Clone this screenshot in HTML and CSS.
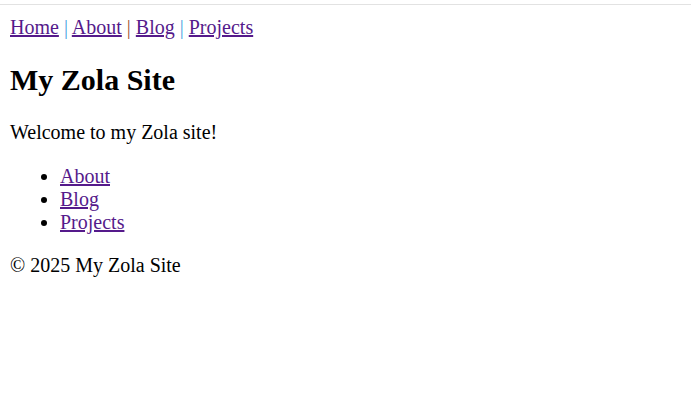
FILE: index.html
```html
<!DOCTYPE html>
<html lang="en">
<head>
<meta charset="utf-8">
<title>My Zola Site</title>
<link rel="stylesheet" href="styles.css">
</head>
<body>
<div class="top-rule"></div>
<div class="page">
  <nav class="nav">
    <a href="#">Home</a> <span class="sep sep-blue">|</span> <a href="#">About</a> <span class="sep sep-brown">|</span> <a href="#">Blog</a> <span class="sep sep-blue">|</span> <a href="#">Projects</a>
  </nav>
  <main>
    <h1 class="title">My Zola Site</h1>
    <p class="text">Welcome to my Zola site!</p>
    <ul class="links">
      <li><a href="#">About</a></li>
      <li><a href="#">Blog</a></li>
      <li><a href="#">Projects</a></li>
    </ul>
  </main>
  <footer class="footer">
    <p class="text">© 2025 My Zola Site</p>
  </footer>
</div>
</body>
</html>
```

FILE: styles.css
```css
html, body {
  margin: 0;
  padding: 0;
  background: #ffffff;
}
body {
  font-family: "Liberation Serif", "Times New Roman", serif;
  font-size: 20px;
  color: #000000;
}
.top-rule {
  margin-top: 4px;
  margin-right: 1px;
  height: 1px;
  background: #e2e2e2;
}
.page {
  padding: 11px 10px 10px 10px;
}
a {
  color: #551a8b;
}
.sep {
  color: #000;
}
.sep-blue { color: #4a9fe0; }
.sep-brown { color: #a0522d; }
.nav {
  display: block;
}
.title {
  font-size: 30px;
  font-weight: bold;
  margin: 24px 0 24px 0;
}
.text {
  margin: 20px 0;
}
.links {
  margin: 21px 0 20px 0;
  padding-left: 50px;
}
.footer .text {
  margin: 20px 0;
}
```
